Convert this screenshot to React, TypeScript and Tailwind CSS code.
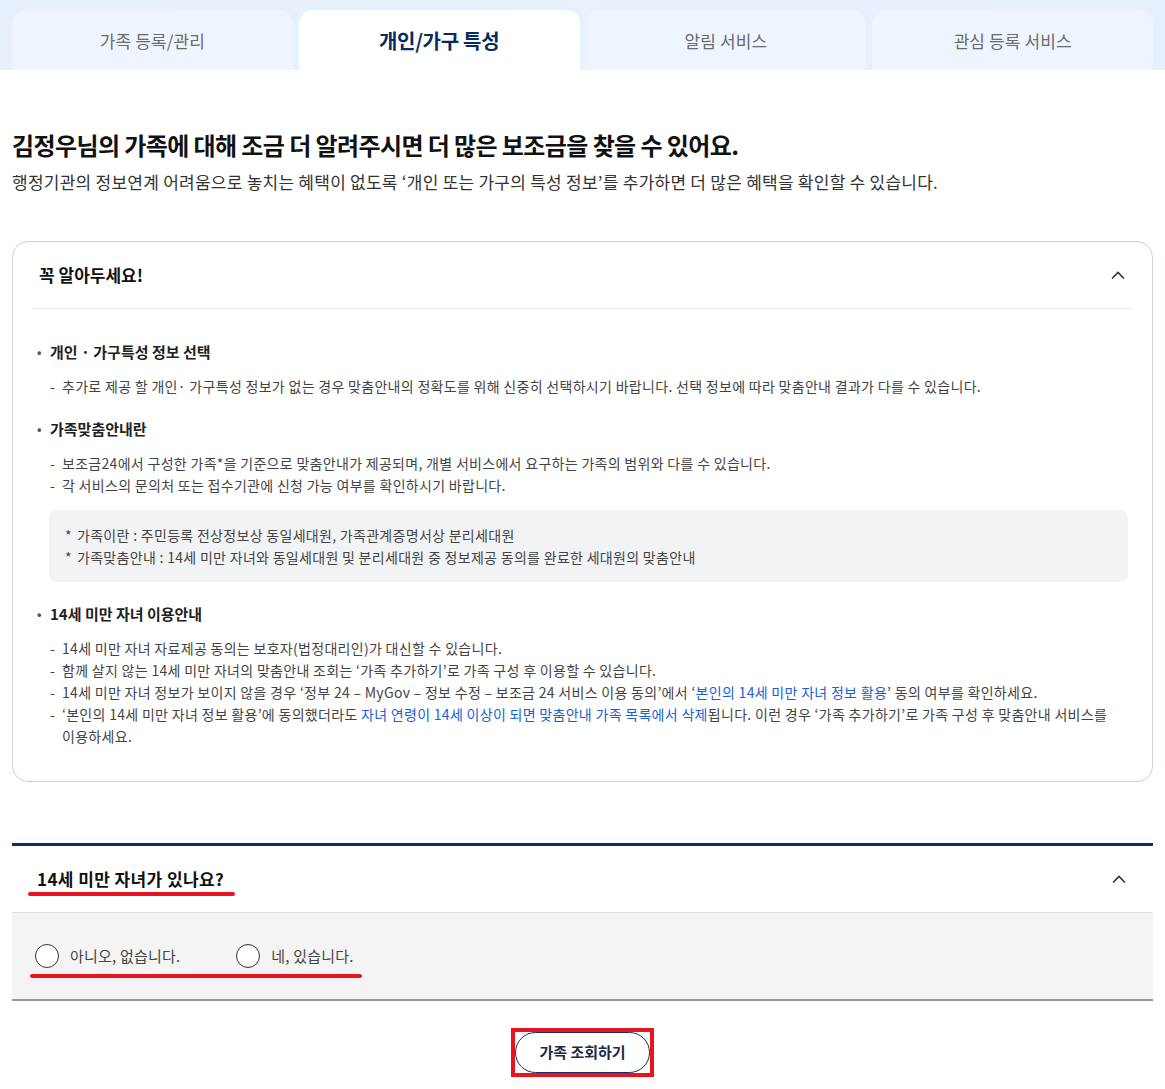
import React from "react";

const FONT = { fontFamily: '"Noto Sans CJK KR", "Noto Sans", sans-serif' };

const TABS = [
  { label: "가족 등록/관리", active: false },
  { label: "개인/가구 특성", active: true },
  { label: "알림 서비스", active: false },
  { label: "관심 등록 서비스", active: false },
];

function Chevron() {
  return (
    <svg width="16" height="10" viewBox="0 0 16 10" fill="none">
      <path d="M2 8.5 8 2.5l6 6" stroke="#333" strokeWidth="1.6" />
    </svg>
  );
}

function Dash({ children }: { children: React.ReactNode }) {
  return (
    <li className="flex">
      <span className="w-3 shrink-0">-</span>
      <span>{children}</span>
    </li>
  );
}

function Point({ title, children }: { title: string; children: React.ReactNode }) {
  return (
    <div>
      <h4 className="flex items-center text-[15px] font-bold tracking-[0px] text-[#222]">
        <span className="w-[13px] text-[12px] text-[#555]">•</span>
        {title}
      </h4>
      <div className="mt-[12px] pl-[13px]">{children}</div>
    </div>
  );
}

function Radio({ label }: { label: string }) {
  return (
    <label className="flex items-center gap-[11px]">
      <span className="h-[24px] w-[24px] rounded-full border border-[#333] bg-white" />
      <span className="text-[15px] tracking-[0.2px] text-[#444]">{label}</span>
    </label>
  );
}

export default function App() {
  return (
    <div className="min-h-[1089px] bg-white" style={FONT}>
      {/* 탭 영역 */}
      <div className="bg-gradient-to-r from-[#e6effc] via-[#e9f1fd] to-[#e6effc] px-3 pt-[10px]">
        <div className="flex gap-[6px]">
          {TABS.map((t) => (
            <div
              key={t.label}
              className={
                t.active
                  ? "flex h-[60px] flex-1 items-center justify-center rounded-t-[14px] bg-white pt-[2px] text-[20px] font-bold tracking-[-0.3px] text-[#0b2a63]"
                  : "flex h-[60px] flex-1 items-center justify-center rounded-t-[14px] bg-[#eff5fe] pt-[2px] text-[17px] tracking-[0.1px] text-[#6b6b6b]"
              }
            >
              {t.label}
            </div>
          ))}
        </div>
      </div>

      <div className="px-3">
        {/* 안내 문구 */}
        <div className="pt-[58px]">
          <h2 className="text-[24px] font-bold leading-[34px] tracking-[-0.6px] text-[#111]">
            김정우님의 가족에 대해 조금 더 알려주시면 더 많은 보조금을 찾을 수 있어요.
          </h2>
          <p className="mt-[7px] text-[17px] leading-[26px] tracking-[0.25px] text-[#333]">
            행정기관의 정보연계 어려움으로 놓치는 혜택이 없도록 ‘개인 또는 가구의 특성 정보’를 추가하면 더 많은 혜택을 확인할 수 있습니다.
          </p>
        </div>

        {/* 꼭 알아두세요 */}
        <div className="mt-[46px] rounded-[16px] border border-[#c9d0dc] px-[20px] pb-[34px]">
          <div className="flex h-[67px] items-center justify-between border-b border-[#e6e9ee] pl-[6px] pr-[6px]">
            <h3 className="text-[17px] font-semibold tracking-[0px] text-[#111]">꼭 알아두세요!</h3>
            <Chevron />
          </div>

          <div className="flex flex-col gap-[21px] break-keep pl-[4px] pr-[4px] pt-[32px] text-[14px] leading-[22px] tracking-[0.3px] text-[#444]">
            <Point title="개인 · 가구특성 정보 선택">
              <ul>
                <Dash>
                  추가로 제공 할 개인· 가구특성 정보가 없는 경우 맞춤안내의 정확도를 위해 신중히 선택하시기 바랍니다. 선택 정보에 따라 맞춤안내 결과가 다를 수 있습니다.
                </Dash>
              </ul>
            </Point>

            <Point title="가족맞춤안내란">
              <ul>
                <Dash>
                  보조금24에서 구성한 가족*을 기준으로 맞춤안내가 제공되며, 개별 서비스에서 요구하는 가족의 범위와 다를 수 있습니다.
                </Dash>
                <Dash>각 서비스의 문의처 또는 접수기관에 신청 가능 여부를 확인하시기 바랍니다.</Dash>
              </ul>
              <div className="-ml-[1px] mt-[14px] rounded-[8px] bg-[#f2f3f5] px-[16px] py-[14px]">
                <p className="flex">
                  <span className="w-3 shrink-0">*</span>가족이란 : 주민등록 전상정보상 동일세대원, 가족관계증명서상 분리세대원
                </p>
                <p className="flex">
                  <span className="w-3 shrink-0">*</span>가족맞춤안내 : 14세 미만 자녀와 동일세대원 및 분리세대원 중 정보제공 동의를 완료한 세대원의 맞춤안내
                </p>
              </div>
            </Point>

            <Point title="14세 미만 자녀 이용안내">
              <ul>
                <Dash>14세 미만 자녀 자료제공 동의는 보호자(법정대리인)가 대신할 수 있습니다.</Dash>
                <Dash>함께 살지 않는 14세 미만 자녀의 맞춤안내 조회는 ‘가족 추가하기’로 가족 구성 후 이용할 수 있습니다.</Dash>
                <Dash>
                  14세 미만 자녀 정보가 보이지 않을 경우 ‘정부 24 – MyGov – 정보 수정 – 보조금 24 서비스 이용 동의’에서 ‘
                  <span className="text-[#1a5fd6]">본인의 14세 미만 자녀 정보 활용</span>’ 동의 여부를 확인하세요.
                </Dash>
                <Dash>
                  ‘본인의 14세 미만 자녀 정보 활용’에 동의했더라도{" "}
                  <span className="text-[#1a5fd6]">자녀 연령이 14세 이상이 되면 맞춤안내 가족 목록에서 삭제</span>됩니다. 이런 경우 ‘가족 추가하기’로 가족 구성 후 맞춤안내 서비스를 이용하세요.
                </Dash>
              </ul>
            </Point>
          </div>
        </div>

        {/* 질문 영역 */}
        <div className="mt-[61px] border-t-[3px] border-[#0b2d6b]">
          <div className="flex h-[67px] items-center justify-between border-b border-[#e2e2e2] pl-[25px] pr-[26px]">
            <div className="relative">
              <h3 className="text-[17px] font-semibold tracking-[0.4px] text-[#111]">14세 미만 자녀가 있나요?</h3>
              <span className="absolute -left-[9px] -right-[11px] top-[26px] h-[4px] rounded-full bg-[#e8141f]" />
            </div>
            <Chevron />
          </div>
          <div className="flex h-[88px] items-center border-b-2 border-[#999] bg-[#f4f4f4] pl-[23px]">
            <div className="relative flex gap-[56px]">
              <Radio label="아니오, 없습니다." />
              <Radio label="네, 있습니다." />
              <span className="absolute -left-[5px] -right-[8px] top-[30px] h-[4px] rounded-full bg-[#e8141f]" />
            </div>
          </div>
        </div>

        {/* 버튼 */}
        <div className="flex justify-center pt-[27px]">
          <div className="border-[4px] border-[#e8141f]">
            <button className="flex h-[41px] w-[135px] items-center justify-center rounded-full border border-[#0b2d6b] bg-white text-[15px] font-semibold tracking-[0px] text-[#1b2a4a]">
              가족 조회하기
            </button>
          </div>
        </div>
      </div>
    </div>
  );
}
